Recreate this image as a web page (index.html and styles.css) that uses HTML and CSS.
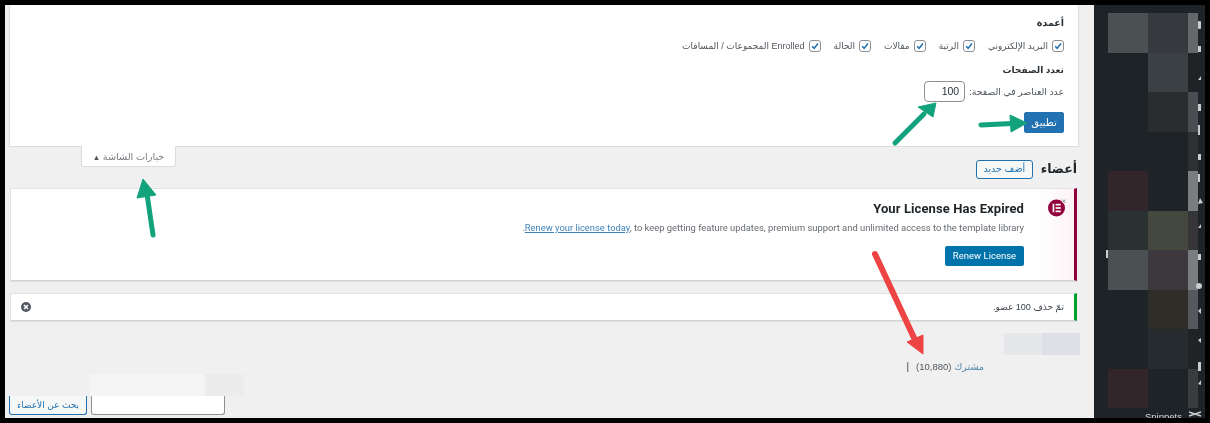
FILE: index.html
```html
<!DOCTYPE html>
<html lang="ar" dir="rtl">
<head>
<meta charset="utf-8">
<title>أعضاء</title>
<link rel="stylesheet" href="styles.css">
</head>
<body>
<div class="frame">
  <aside class="sidebar" dir="ltr">
    <div class="mosaic">
      <i class="m4"></i><i class="m3"></i><i class="m6"></i>
      <i></i><i class="m3b"></i><i class="m0"></i>
      <i></i><i class="m2"></i><i class="m4b"></i>
      <i></i><i></i><i class="m2b"></i>
      <i class="mr"></i><i></i><i class="m7"></i>
      <i class="mt"></i><i class="mg"></i><i class="m3c"></i>
      <i class="m4"></i><i class="mp"></i><i class="m7"></i>
      <i></i><i class="mo"></i><i class="m5"></i>
      <i></i><i class="m1"></i><i class="m0"></i>
      <i class="mr"></i><i></i><i class="m3d"></i>
    </div>
    <div class="snip">Snippets</div>
  </aside>
  <main class="content">
    <section class="panel">
      <h5 class="panel-title">أعمدة</h5>
      <div class="checks">
        <label class="check"><span class="cb"><svg viewBox="0 0 12 12"><path d="M2.6 6.2 5 8.8 9.6 3"/></svg></span>البريد الإلكتروني</label>
        <label class="check"><span class="cb"><svg viewBox="0 0 12 12"><path d="M2.6 6.2 5 8.8 9.6 3"/></svg></span>الرتبة</label>
        <label class="check"><span class="cb"><svg viewBox="0 0 12 12"><path d="M2.6 6.2 5 8.8 9.6 3"/></svg></span>مقالات</label>
        <label class="check"><span class="cb"><svg viewBox="0 0 12 12"><path d="M2.6 6.2 5 8.8 9.6 3"/></svg></span>الحالة</label>
        <label class="check"><span class="cb"><svg viewBox="0 0 12 12"><path d="M2.6 6.2 5 8.8 9.6 3"/></svg></span>Enrolled المجموعات / المسافات</label>
      </div>
      <h5 class="panel-title second">تعدد الصفحات</h5>
      <div class="per-page">
        <span>عدد العناصر في الصفحة:</span>
        <span class="num">100</span>
      </div>
      <button class="apply">تطبيق</button>
    </section>

    <div class="title-row">
      <h1 class="page-title">أعضاء</h1>
      <a class="add-new">أضف جديد</a>
      <button class="tab">خيارات الشاشة <span class="tri">▲</span></button>
    </div>

    <section class="notice license">
      <div class="badge-col">
        <svg class="badge" viewBox="0 0 20 20">
          <circle cx="9.5" cy="10" r="8.5" fill="#92003b"/>
          <rect x="5.6" y="5.8" width="1.7" height="8.4" fill="#fff"/>
          <rect x="8.6" y="5.8" width="5.2" height="1.7" fill="#fff"/>
          <rect x="8.6" y="9.15" width="5.2" height="1.7" fill="#fff"/>
          <rect x="8.6" y="12.5" width="5.2" height="1.7" fill="#fff"/>
          <path d="M15 1.5 18.5 5M18.5 1.5 15 5" stroke="#8a8f94" stroke-width="1"/>
        </svg>
      </div>
      <div class="license-body" dir="ltr">
        <h3 class="license-title">Your License Has Expired</h3>
        <p class="license-text">.<a class="renew-link">Renew your license today</a>, to keep getting feature updates, premium support and unlimited access to the template library</p>
        <a class="renew-btn">Renew License</a>
      </div>
    </section>

    <section class="notice success">
      <p class="success-text">تمّ حذف 100 عضو.</p>
      <svg class="dismiss" viewBox="0 0 12 12">
        <circle cx="6" cy="6" r="5" fill="#50575e"/>
        <path d="M4 4 8 8M8 4 4 8" stroke="#fff" stroke-width="1.5"/>
      </svg>
    </section>

    <div class="blur-tabs"><i class="bt-a"></i><i class="bt-b"></i></div>
    <div class="subs"><a class="subs-link">مشترك</a> <span class="count">(10,880)</span> <span class="pipe">|</span></div>
    <div class="blur-search"><i class="bs-a"></i><i class="bs-b"></i></div>
    <div class="search">
      <span class="search-input"></span>
      <button class="search-btn">بحث عن الأعضاء</button>
    </div>
  </main>
</div>
<svg class="overlay" viewBox="0 0 1210 423" dir="ltr">
  <g>
    <path class="shaft" d="M895 143 924 114"/>
    <path class="head" d="M936 103 918 107 933 117Z"/>
    <path class="shaft" d="M981 125 1012 123.500"/>
    <path class="head" d="M1027 123 1010 115 1011 132Z"/>
    <path class="shaft" d="M153 235 147 194"/>
    <path class="head" d="M143 179 137 198 156 195Z"/>
  </g>
  <path class="shaft red" d="M875 254 915 340"/>
  <path class="head redfill" d="M923 354 907 342 923 335Z"/>
  <g class="scraps">
    <rect x="1198" y="21" width="3" height="8" rx="1"/>
    <rect x="1198" y="46" width="3" height="6"/>
    <path d="M1198 80 1201 76V80Z"/>
    <rect x="1198" y="104" width="3" height="7"/>
    <rect x="1198" y="125" width="2" height="10"/>
    <rect x="1198" y="154" width="3" height="6"/>
    <rect x="1198" y="174" width="2" height="8"/>
    <path d="M1198 204 1203 203 1200 198Z"/>
    <path d="M1198 228 1201 224V228Z"/>
    <rect x="1198" y="254" width="3" height="6"/>
    <circle cx="1199" cy="286" r="3"/>
    <path d="M1198 311 1201 308V314Z"/>
    <path d="M1198 340 1201 338V343Z"/>
    <rect x="1198" y="362" width="3" height="9"/>
    <path d="M1198 384 1201 380V385Z"/>
    <rect x="1106" y="250" width="2" height="8"/>
    <path d="M1189 412 1201 416M1189 416 1201 412" class="scissor"/>
  </g>
</svg>
</body>
</html>
```
FILE: styles.css
```css
* { box-sizing: border-box; }
html, body { margin: 0; height: 423px; overflow: hidden; background: #000; }
body { font-family: "Liberation Sans", "DejaVu Sans", sans-serif; font-size: 9px; color: #50575e; position: relative; }
h1, h3, h5, p { margin: 0; font-weight: 400; }
button { font-family: inherit; margin: 0; padding: 0; }

.frame { display: flex; height: 413px; margin: 5px; background: #f0f0f1; filter: blur(.35px); }

.sidebar { flex: 0 0 111px; background: #1d2327; padding: 8px 0 0 14px; overflow: hidden; display: flex; flex-direction: column; }
.mosaic { display: grid; grid-template-columns: 40px 40px 10px; grid-auto-rows: 39.5px; }
.m0 { background: #1f2325; }
.m1 { background: #252b2e; }
.m2 { background: #2a2d2e; }
.m2b { background: #2e3133; }
.m3 { background: #363a3f; }
.m3b { background: #3b4044; }
.m3c { background: #363638; }
.m3d { background: #3a3c3e; }
.m4 { background: #4b5053; }
.m4b { background: #4a4d52; }
.m5 { background: #55585c; }
.m6 { background: #64686b; }
.m7 { background: #7a7d80; }
.mr { background: #33262a; }
.mt { background: #2a3132; }
.mg { background: #45483f; }
.mp { background: #3c383d; }
.mo { background: #2e2d28; }
.snip { margin: 2px 0 0 37px; font: 9.500px/14px "Liberation Sans", sans-serif; color: #d8d8d8; white-space: nowrap; }

.content { flex: 1; min-width: 0; margin: 0 15px 0 0; padding-left: 4px; width: 0; }

.panel { height: 142px; background: #fff; border: 1px solid #dcdcde; border-top: 0; padding: 10px 14px 0 0; display: flex; flex-direction: column; align-items: flex-start; }
.panel-title { font-size: 9.500px; line-height: 16px; font-weight: 700; color: #2c3338; }
.panel-title.second { margin-top: 7px; font-size: 9px; }
.checks { display: flex; gap: 13px; height: 18px; margin-top: 6px; align-items: center; }
.check { display: flex; align-items: center; gap: 4px; white-space: nowrap; }
.cb { flex: none; width: 12px; height: 12px; background: #fff; border: 1px solid #8c8f94; border-radius: 3px; display: block; }
.cb svg { display: block; width: 10px; height: 10px; fill: none; stroke: #2271b1; stroke-width: 1.8; }
.per-page { display: flex; align-items: center; gap: 4px; height: 21px; margin-top: 3px; font-size: 9.300px; }
.num { width: 41px; height: 21px; background: #fff; border: 1px solid #8c8f94; border-radius: 4px; font-size: 10.500px; line-height: 19px; color: #2c3338; padding: 0 5px; text-align: right; direction: ltr; }
.apply { width: 40px; height: 21px; margin-top: 10px; background: #2271b1; border: 1px solid #2271b1; border-radius: 2px; color: #fff; font-size: 10px; }

.title-row { height: 41px; display: flex; align-items: flex-start; padding-right: 2px; }
.page-title { font-size: 12.500px; font-weight: 700; line-height: 18px; margin-top: 13px; color: #1d2327; }
.add-new { margin: 13px 8px 0 0; width: 57px; height: 19px; border: 1px solid #2271b1; border-radius: 3px; background: #f6f7f7; color: #2271b1; text-align: center; line-height: 16px; font-size: 9.500px; }
.tab { margin: -1px auto 0 72px; width: 95px; height: 21px; background: #fff; border: 1px solid #dcdcde; border-top: 0; border-radius: 0 0 3px 3px; color: #787c82; font-size: 9.700px; }
.tri { font-size: 7.500px; color: #50575e; }

.notice { margin: 0 2px 0 1px; background: #fff; border: 1px solid #e2e2e4; border-right-width: 3px; border-bottom-color: #d4d4d7; display: flex; box-shadow: 0 1px 0 #dedee0; }
.license { height: 93px; border-right-color: #92003b; }
.badge-col { flex: 0 0 35px; background: linear-gradient(to left, #fdf3f6, #fff); padding: 9px 0 0 0; display: flex; justify-content: center; align-items: flex-start; }
.badge { width: 20px; height: 20px; }
.license-body { flex: 1; display: flex; flex-direction: column; align-items: flex-end; padding: 11px 15px 0 0; font-family: Roboto, "Liberation Sans", sans-serif; }
.license-title { font-size: 13px; line-height: 18px; font-weight: 700; color: #1d2327; letter-spacing: .1px; }
.license-text { font-size: 9.400px; line-height: 18px; margin-top: 1px; color: #666b70; white-space: nowrap; }
.renew-link { color: #3f82b8; text-decoration: underline; }
.renew-btn { width: 79px; height: 20px; margin-top: 9px; background: #0073aa; color: #fff; border-radius: 2px; font-size: 9.500px; line-height: 20px; text-align: center; }

.success { height: 28px; margin-top: 12px; border-right-color: #00a32a; align-items: center; justify-content: space-between; padding: 0 10px 0 9px; }
.success-text { font-size: 9px; color: #3c434a; }
.dismiss { width: 12px; height: 12px; }

.blur-tabs { display: flex; height: 22px; margin: 12px -1px 0 0; }
.blur-tabs i { width: 38px; }
.bt-a { background: #dde0e5; }
.bt-b { background: #e5e7ea; }
.subs { height: 16px; margin-top: 4px; padding-right: 95px; line-height: 16px; display: flex; gap: 3px; }
.subs-link { color: #4f87ad; font-size: 9.500px; }
.pipe { margin-right: 4px; color: #3c434a; font-size: 10px; }
.count { font-size: 9.500px; color: #50575e; }
.blur-search { display: flex; height: 22px; margin: -1px 0 0; justify-content: flex-end; padding-left: 81px; }
.bs-a { width: 39px; background: #ececec; }
.bs-b { width: 115px; background: #f5f5f5; }
.search { display: flex; justify-content: flex-end; gap: 4px; height: 19px; }
.search-input { width: 134px; background: #fff; border: 1px solid #8c8f94; border-top: 0; border-radius: 0 0 3px 3px; }
.search-btn { width: 78px; background: #f6f7f7; border: 1px solid #2271b1; border-top: 0; border-radius: 0 0 3px 3px; color: #2271b1; font-size: 9px; }

.overlay { position: absolute; left: 0; top: 0; width: 1210px; height: 423px; pointer-events: none; filter: blur(.35px); }
.shaft { fill: none; stroke: #12a37c; stroke-width: 5; stroke-linecap: round; }
.head { fill: #12a37c; stroke: #12a37c; stroke-width: 1; stroke-linejoin: round; }
.red { stroke: #ef4444; stroke-width: 6; }
.redfill { fill: #ef4444; stroke: #ef4444; }
.scraps { fill: #c9cbcc; }
.scissor { stroke: #c9cbcc; stroke-width: 1.500; fill: none; }
```
